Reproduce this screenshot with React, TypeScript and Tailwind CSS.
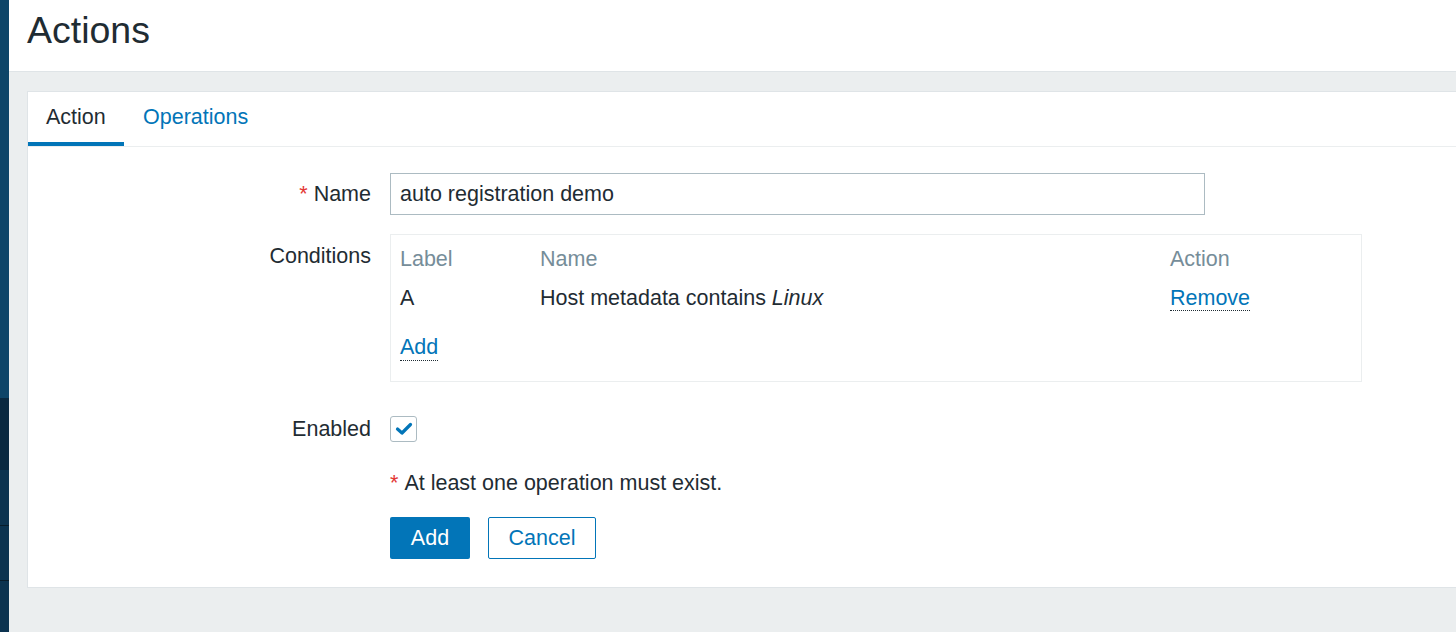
import React from 'react';

const conditions = [{ label: 'A', text: 'Host metadata contains ', value: 'Linux' }];

function Sidebar() {
  return (
    <div className="flex w-[9px] shrink-0 flex-col">
      <div className="h-[398px] bg-[#0e4568]" />
      <div className="h-[72px] bg-[#0a2940]" />
      <div className="h-[56px] border-b border-[#081c2b] bg-[#0c3350]" />
      <div className="h-[55px] border-b border-[#081c2b] bg-[#0c3350]" />
      <div className="flex-1 bg-[#0c3350]" />
    </div>
  );
}

function Checkbox() {
  return (
    <div className="flex h-[26px] w-[27px] items-center justify-center rounded-[3px] border border-[#acbbc2] bg-white">
      <svg width="18" height="14" viewBox="0 0 18 14" fill="none">
        <path d="M2.5 7 L7 11 L15.5 2.5" stroke="#0275b8" strokeWidth="3.2" strokeLinecap="round" strokeLinejoin="round" />
      </svg>
    </div>
  );
}

export default function App() {
  return (
    <div className="flex h-[632px] w-[1456px] overflow-hidden bg-[#ebeeef] font-['Liberation_Sans',Arial,sans-serif] text-[21.5px] leading-[24px] text-[#1f2c33]">
      <Sidebar />
      <div className="flex min-w-0 flex-1 flex-col">
        <header className="h-[72px] shrink-0 border-b border-[#dfe4e7] bg-white pl-[18px]">
          <h1 className="pt-[9px] text-[37.5px] leading-[42px] font-normal">Actions</h1>
        </header>

        <div className="mt-[19px] ml-[18px] mr-[-20px] border border-[#dfe4e7] bg-white">
          <div className="flex h-[55px] border-b border-[#ebeeef]">
            <div className="flex w-[96px] items-center border-b-4 border-[#0275b8] pl-[18px]">Action</div>
            <div className="flex items-center pb-[4px] pl-[19px] text-[#0275b8]">Operations</div>
          </div>

          <div className="pt-[26px] pb-[28px]">
            <div className="flex items-center">
              <div className="w-[343px] text-right">
                <span className="mr-[6px] text-[#e33734]">*</span>Name
              </div>
              <div className="ml-[19px] flex h-[42px] w-[815px] items-center border border-[#acbbc2] px-[9px]">
                auto registration demo
              </div>
            </div>

            <div className="mt-[19px] flex items-start">
              <div className="w-[343px] pt-[10px] text-right">Conditions</div>
              <div className="ml-[19px] w-[972px] border border-[#ebeeef] px-[9px] pt-[12px] pb-[20px]">
                <div className="grid grid-cols-[140px_630px_1fr] text-[#768d99]">
                  <div>Label</div>
                  <div>Name</div>
                  <div>Action</div>
                </div>
                {conditions.map((c) => (
                  <div key={c.label} className="mt-[15px] grid grid-cols-[140px_630px_1fr]">
                    <div>{c.label}</div>
                    <div>
                      {c.text}
                      <i>{c.value}</i>
                    </div>
                    <div>
                      <span className="inline-block border-b border-dotted border-[#1f2c33] text-[#0275b8]">Remove</span>
                    </div>
                  </div>
                ))}
                <div className="mt-[24px]">
                  <span className="inline-block border-b border-dotted border-[#1f2c33] text-[#0275b8] leading-[25px]">Add</span>
                </div>
              </div>
            </div>

            <div className="mt-[26px] flex h-[42px] items-center">
              <div className="w-[343px] text-right">Enabled</div>
              <div className="ml-[19px]">
                <Checkbox />
              </div>
            </div>

            <div className="mt-[21px] ml-[362px]">
              <span className="mr-[6px] text-[#e33734]">*</span>At least one operation must exist.
            </div>

            <div className="mt-[22px] ml-[362px] flex gap-[18px]">
              <button className="h-[42px] w-[80px] rounded-[2px] bg-[#0275b8] text-white">Add</button>
              <button className="h-[42px] w-[108px] rounded-[2px] border border-[#0275b8] bg-white text-[#0275b8]">Cancel</button>
            </div>
          </div>
        </div>
      </div>
    </div>
  );
}
